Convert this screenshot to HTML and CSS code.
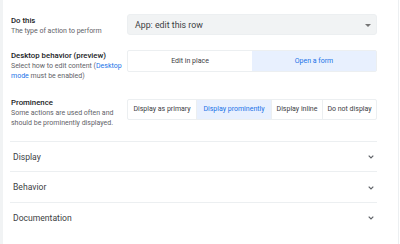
FILE: index.html
```html
<!DOCTYPE html>
<html>
<head>
<meta charset="utf-8">
<link rel="stylesheet" href="styles.css">
</head>
<body>
<div class="panel">
  <div class="field f1">
    <div class="label">
      <div class="title">Do this</div>
      <div class="sub">The type of action to perform</div>
    </div>
    <div class="select">
      <span>App: edit this row</span>
      <svg class="caret" width="6" height="3" viewBox="0 0 6 3"><path d="M0 0h6L3 3z" fill="#757575"/></svg>
    </div>
  </div>
  <div class="field f2">
    <div class="label">
      <div class="title">Desktop behavior (preview)</div>
      <div class="sub">Select how to edit content (<span class="link">Desktop</span><br><span class="link">mode</span> must be enabled)</div>
    </div>
    <div class="seg two">
      <div class="opt">Edit in place</div>
      <div class="opt on">Open a form</div>
    </div>
  </div>
  <div class="field f3">
    <div class="label">
      <div class="title">Prominence</div>
      <div class="sub">Some actions are used often and should be prominently displayed.</div>
    </div>
    <div class="seg four">
      <div class="opt">Display as primary</div>
      <div class="opt on">Display prominently</div>
      <div class="opt">Display inline</div>
      <div class="opt">Do not display</div>
    </div>
  </div>
  <div class="acc">
    <div class="acc-row"><span>Display</span><svg class="chev" width="6" height="4" viewBox="0 0 6 4"><path d="M0.7 0.7L3 3 5.3 0.7" fill="none" stroke="#5f6368" stroke-width="1.2"/></svg></div>
    <div class="acc-row"><span>Behavior</span><svg class="chev" width="6" height="4" viewBox="0 0 6 4"><path d="M0.7 0.7L3 3 5.3 0.7" fill="none" stroke="#5f6368" stroke-width="1.2"/></svg></div>
    <div class="acc-row"><span>Documentation</span><svg class="chev" width="6" height="4" viewBox="0 0 6 4"><path d="M0.7 0.7L3 3 5.3 0.7" fill="none" stroke="#5f6368" stroke-width="1.2"/></svg></div>
  </div>
</div>
</body>
</html>
```
FILE: styles.css
```css
* { box-sizing: border-box; }
html, body { margin: 0; padding: 0; background: #fff; }
body {
  font-family: Roboto, "Liberation Sans", sans-serif;
  color: #3c4043;
  width: 400px;
  height: 244px;
  overflow: hidden;
}
.panel {
  width: 399px;
  height: 244px;
  border-left: 3px solid #f1f3f4;
  border-right: 1px solid #eceff1;
  padding: 14px 0 0 8px;
}
.field {
  display: grid;
  grid-template-columns: 116px 250px;
  align-items: start;
}
.f2 { margin-top: 12px; }
.f3 { margin-top: 16px; }
.f3 .label { margin-top: -2px; }
.f2 .seg, .f3 .seg { margin-top: 1px; }
.title {
  font-size: 7.8px;
  font-weight: 500;
  color: #202124;
  line-height: 11px;
  padding-top: 1px;
}
.sub {
  font-size: 7px;
  line-height: 10.6px;
  color: #5f6368;
}
.link { color: #1a73e8; }
.select {
  height: 21px;
  background: #f1f3f4;
  border: 1px solid #eceff1;
  border-radius: 3px;
  display: flex;
  align-items: center;
  justify-content: space-between;
  padding: 0 5px 0 7px;
  font-size: 8.8px;
  color: #3c4043;
}
.caret { margin-top: 1px; }
.seg {
  display: flex;
  border: 1px solid #eceff1;
  border-radius: 2px;
  height: 22px;
}
.four { height: 21px; }
.opt {
  display: flex;
  align-items: center;
  justify-content: center;
  font-size: 7px;
  color: #3c4043;
  white-space: nowrap;
}
.opt.on { background: #e8f0fe; color: #1a73e8; }
.two .opt { flex: 1; }
.four .opt { border-left: 1px solid #eceff1; }
.four .opt:first-child { border-left: none; }
.four .opt:nth-child(1) { width: 68px; }
.four .opt:nth-child(2) { width: 75px; }
.four .opt:nth-child(3) { width: 51px; }
.four .opt:nth-child(4) { flex: 1; }
.acc {
  margin-top: 12px;
  width: 367px;
  margin-left: -1px;
}
.acc-row {
  height: 30.5px;
  border-top: 1px solid #eceff1;
  display: flex;
  align-items: center;
  justify-content: space-between;
  padding: 0 3px 0 3px;
  font-size: 8.6px;
  color: #3c4043;
}
.chev { margin-top: 1px; }
```
